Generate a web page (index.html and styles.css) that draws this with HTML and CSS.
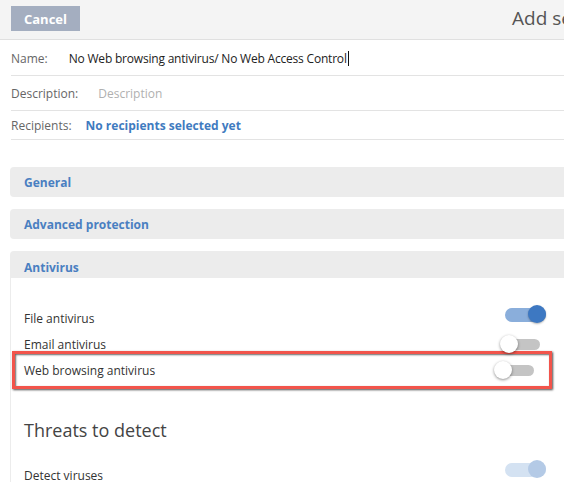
FILE: index.html
```
<!DOCTYPE html>
<html lang="en">
<head>
    <meta charset="UTF-8">
    <meta name="viewport" content="width=device-width, initial-scale=1.0">
    <title>Add settings</title>
    <link rel="stylesheet" href="styles.css">
</head>
<body>
    <div class="topbar">
        <button class="btn-cancel">Cancel</button>
        <h1 class="title">Add settings</h1>
    </div>

    <div class="fields">
        <div class="field name-row">
            <label>Name:</label>
            <span class="value">No Web browsing antivirus/ No Web Access Control</span><span class="caret"></span>
        </div>
        <div class="field desc-row">
            <label>Description:</label>
            <input type="text" placeholder="Description">
        </div>
        <div class="field recip-row">
            <label>Recipients:</label>
            <a href="#" class="link">No recipients selected yet</a>
        </div>
    </div>

    <div class="sections">
        <div class="panel">
            <div class="panel-head">General</div>
        </div>
        <div class="panel">
            <div class="panel-head">Advanced protection</div>
        </div>
        <div class="panel open">
            <div class="panel-head">Antivirus</div>
            <div class="panel-body">
                <div class="setting first">
                    <span>File antivirus</span>
                    <span class="toggle on"><span class="track"></span><span class="knob"></span></span>
                </div>
                <div class="setting">
                    <span>Email antivirus</span>
                    <span class="toggle"><span class="track"></span><span class="knob"></span></span>
                </div>
                <!-- highlighted row -->
                <div class="setting marked">
                    <span>Web browsing antivirus</span>
                    <span class="toggle"><span class="track"></span><span class="knob"></span></span>
                </div>

                <h2 class="subhead">Threats to detect</h2>

                <div class="setting faded">
                    <span>Detect viruses</span>
                    <span class="toggle on"><span class="track"></span><span class="knob"></span></span>
                </div>
            </div>
        </div>
    </div>
</body>
</html>
```

FILE: styles.css
```
body {
    margin: 0;
    font-family: "Open Sans", "DejaVu Sans", sans-serif;
    font-size: 12px;
    color: #333;
    background: white;
    overflow: hidden;
    width: 564px;
}

.topbar {
    display: flex;
    align-items: center;
    height: 40px;
    background: #f4f4f4;
    border-bottom: 1px solid #e0e0e0;
    box-sizing: border-box;
    padding-left: 11px;
    white-space: nowrap;
}

.btn-cancel {
    flex-shrink: 0;
    width: 69px;
    height: 25px;
    border: none;
    background: #a4aec0;
    color: white;
    font-family: inherit;
    font-size: 13px;
    font-weight: bold;
    padding: 0;
    margin-top: -2px;
}

.title {
    flex-shrink: 0;
    margin: -4px 0 0 432px;
    font-size: 19px;
    font-weight: normal;
    color: #555;
}

.fields {
    margin-left: 11px;
}

.field {
    display: flex;
    align-items: center;
    border-bottom: 1px solid #e3e3e3;
}

.field label {
    color: #666;
}

.field input {
    border: none;
    outline: none;
    font-family: inherit;
    font-size: 12px;
    color: #222;
    padding: 0;
    background: transparent;
}

.name-row {
    height: 36px;
    padding-top: 1px;
    box-sizing: border-box;
}

.name-row .value {
    margin-left: 21px;
    color: #222;
    letter-spacing: -0.2px;
}

.caret {
    display: inline-block;
    width: 1px;
    height: 15px;
    background: #111;
    margin-left: 1px;
}

.desc-row {
    height: 34px;
}

.desc-row input {
    margin-left: 20px;
}

.desc-row input::placeholder {
    color: #b0b0b0;
}

.recip-row {
    height: 28px;
}

.link {
    margin-left: 14px;
    color: #3f7bc0;
    font-weight: bold;
    text-decoration: none;
}

.sections {
    margin: 27px 0 0 10px;
}

.panel {
    margin-bottom: 12px;
}

.panel-head {
    height: 30px;
    line-height: 32px;
    padding-left: 14px;
    background: #ececec;
    border-radius: 4px 0 0 4px;
    color: #4a7fc1;
    font-weight: bold;
}

.panel.open .panel-head {
    height: 27px;
    line-height: 33px;
    border-radius: 4px 0 0 0;
}

.panel-body {
    border-left: 1px solid #ececec;
    padding-top: 27px;
    padding-bottom: 20px;
}

.setting {
    display: flex;
    justify-content: space-between;
    align-items: center;
    height: 26px;
    padding: 0 18px 0 13px;
    color: #333;
}

.setting.marked {
    height: 32px;
    margin: -6px 12px 0 1px;
    padding: 0 9px 0 9px;
    border: 3px solid #f2544b;
    box-shadow: 1px 1px 2px rgba(0, 0, 0, 0.7), inset 1px 1px 2px rgba(0, 0, 0, 0.6);
}

.subhead {
    margin: 29px 0 20px 13px;
    font-size: 18px;
    font-weight: normal;
    color: #444;
}

.toggle {
    position: relative;
    display: inline-block;
    width: 46px;
    height: 18px;
}

.track {
    position: absolute;
    top: 4px;
    left: 10px;
    right: 6px;
    height: 11px;
    border-radius: 6px;
    background: #c4c4c4;
}

.knob {
    position: absolute;
    top: 0;
    left: 0;
    width: 18px;
    height: 18px;
    border-radius: 50%;
    background: white;
    box-shadow: 0 1px 3px rgba(0, 0, 0, 0.45);
}

.toggle.on .track {
    left: 5px;
    right: 0;
    top: 3px;
    height: 14px;
    border-radius: 7px;
    background: #8aaedb;
}

.toggle.on .knob {
    left: auto;
    right: 0;
    background: #3d78c2;
    box-shadow: 0 1px 2px rgba(0, 0, 0, 0.3);
}

.setting.first .toggle {
    margin-top: -8px;
}

.setting.faded .toggle {
    margin-top: -12px;
}

.setting.faded .track {
    background: #d4e2f2;
}

.setting.faded .knob {
    background: #b4cae6;
    box-shadow: none;
}
```
